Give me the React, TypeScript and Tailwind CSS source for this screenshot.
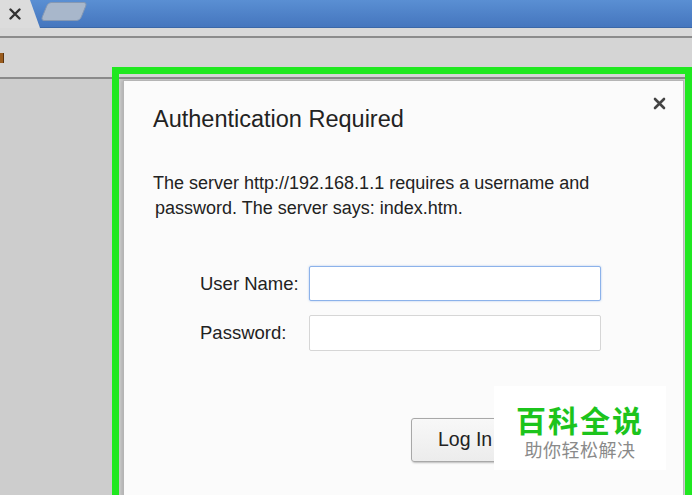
import React from "react";

export default function App() {
  return (
    <div className="relative w-[692px] h-[495px] overflow-hidden bg-[#cdcdcd] font-['Liberation_Sans',Arial,sans-serif]">
      {/* tab strip */}
      <div className="flex h-[28px] bg-[#dcdcdc]">
        <div className="w-[30px] flex items-center justify-center">
          <svg width="12" height="12" viewBox="0 0 12 12">
            <path d="M1.5 1.5 L10.5 10.5 M10.5 1.5 L1.5 10.5" stroke="#333" strokeWidth="2.4" strokeLinecap="round" />
          </svg>
        </div>
        <div className="relative flex-1 bg-gradient-to-b from-[#5a8fd3] to-[#4576be] border-b border-[#3b68a8] rounded-bl-[6px] [clip-path:polygon(0_0,100%_0,100%_100%,10px_100%)]">
          <div className="absolute left-[14px] top-[2px] w-[40px] h-[19px] rounded-[4px] bg-[#a8b7cb] border border-[#8598b3] -skew-x-[22deg]" />
        </div>
      </div>
      <div className="h-[8px] bg-[#d9d9d9]" />
      <div className="h-[2px] bg-[#8c8c8c]" />
      {/* toolbar */}
      <div className="h-[39px] bg-[#d5d5d5] flex items-center">
        <div className="w-[4px] h-[10px] bg-[#9a5c1e] border-r border-[#5a3410]" />
      </div>
      <div className="h-[2px] bg-[#8a8a8a]" />

      {/* highlighted dialog overlay */}
      <div className="absolute left-[112px] top-[67px] w-[580px] h-[440px] border-[7px] border-[#20e820]">
        <div className="absolute left-[4px] top-[6px] right-[1px] bottom-0 bg-[#fbfbfb] border border-[#b5b5b5] shadow-[-2px_0_3px_rgba(0,0,0,0.12)]">
          <div className="absolute right-[17px] top-[16px]">
            <svg width="13" height="13" viewBox="0 0 13 13">
              <path d="M2 2 L11 11 M11 2 L2 11" stroke="#444" strokeWidth="2.6" strokeLinecap="round" />
            </svg>
          </div>
          <div className="pl-[29px] pt-[24px]">
            <div className="text-[23.5px] leading-[28px] text-[#222]">Authentication Required</div>
            <div className="mt-[38px] text-[18px] leading-[25px] text-[#222]">
              <div>The server http://192.168.1.1 requires a username and</div>
              <div className="pl-[2px]">password. The server says: index.htm.</div>
            </div>
            <div className="mt-[45px] ml-[47px] grid grid-cols-[109px_292px] gap-y-[14px] items-center text-[18.5px] text-[#222]">
              <div>User Name:</div>
              <div className="h-[35px] rounded-[2px] border border-[#8cb2ea] bg-white shadow-[0_0_2px_rgba(80,140,230,0.5)]" />
              <div>Password:</div>
              <div className="h-[36px] rounded-[2px] border border-[#d6d6d6] bg-white" />
            </div>
            <div className="mt-[67px] ml-[258px] w-[108px] h-[44px] rounded-[3px] border border-[#a8a8a8] bg-gradient-to-b from-[#f8f8f8] to-[#ececec] shadow-[1px_1px_2px_rgba(0,0,0,0.25)] flex items-center pl-[26px] text-[19.5px] text-[#222]">
              Log In
            </div>
          </div>
        </div>
      </div>

      {/* watermark */}
      <div className="absolute left-[494px] top-[386px] w-[172px] h-[84px] bg-white flex flex-col items-center pt-[16px]">
        <div className="text-[30px] leading-[34px] font-bold text-[#1cc41c] tracking-[2px] font-['Noto_Sans_CJK_SC',sans-serif]">百科全说</div>
        <div className="mt-[3px] text-[18px] leading-[20px] text-[#8a8a8a] tracking-[0.5px] font-['Noto_Sans_CJK_SC',sans-serif]">助你轻松解决</div>
      </div>
    </div>
  );
}
